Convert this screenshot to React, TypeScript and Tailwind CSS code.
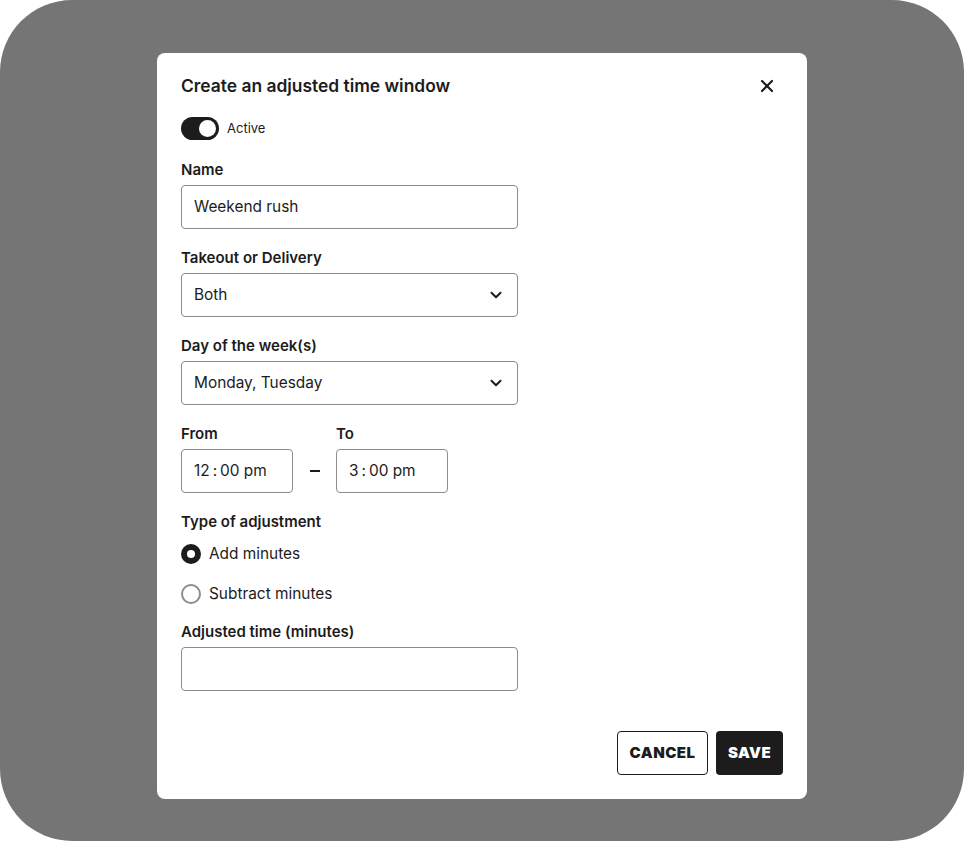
import { useState, type FC, type ReactNode } from "react";
import { ChevronDown, X } from "lucide-react";

const Label: FC<{ children: ReactNode }> = ({ children }) => (
  <label className="block h-5 text-[15px] leading-5 font-semibold text-[#1c1c1c]">
    {children}
  </label>
);

const Select: FC<{ value: string }> = ({ value }) => (
  <div className="mt-[5px] flex h-11 w-[337px] items-center justify-between rounded-[4px] border border-[#8c8c8c] pl-3 pr-[12px]">
    <span className="text-[15.4px] text-[#1c1c1c]">{value}</span>
    <ChevronDown size={18} strokeWidth={2.6} className="text-[#1c1c1c]" />
  </div>
);

const TimeBox: FC<{ h: string; rest: string }> = ({ h, rest }) => (
  <div className="mt-[5px] flex h-11 w-[112px] items-center rounded-[4px] border border-[#8c8c8c] pl-3 text-[15.4px] text-[#1c1c1c]">
    {h}
    <span className="mx-[3px]">:</span>
    {rest}
  </div>
);

const Radio: FC<{ checked: boolean; label: string; onClick: () => void }> = ({
  checked,
  label,
  onClick,
}) => (
  <div className="flex h-10 cursor-pointer items-center gap-2" onClick={onClick}>
    {checked ? (
      <span className="flex h-5 w-5 items-center justify-center rounded-full bg-[#1c1c1c]">
        <span className="h-2 w-2 rounded-full bg-white" />
      </span>
    ) : (
      <span className="h-5 w-5 rounded-full border-2 border-[#8c8c8c]" />
    )}
    <span className="text-[15.4px] text-[#1c1c1c]">{label}</span>
  </div>
);

export default function App() {
  const [active, setActive] = useState(true);
  const [mode, setMode] = useState<"add" | "sub">("add");

  return (
    <div
      className="h-[842px] w-[964px] bg-white"
      style={{ fontFamily: "Inter, 'Noto Sans', sans-serif" }}
    >
      <div className="flex h-[841px] w-[964px] justify-center rounded-[72px] bg-[#757575] pt-[53px]">
        <div className="h-[746px] w-[650px] rounded-[8px] bg-white px-6 pt-[21px]">
          <div className="flex h-6 items-center justify-between">
            <h2 className="text-[17.4px] leading-6 font-semibold text-[#1c1c1c]">
              Create an adjusted time window
            </h2>
            <X size={20} strokeWidth={2.6} className="mr-[6px] text-[#1c1c1c]" />
          </div>

          <div className="mt-[19px] flex items-center gap-2">
            <button
              onClick={() => setActive(!active)}
              className={`flex h-[23px] w-[38px] items-center rounded-full p-[3px] ${
                active ? "justify-end bg-[#1c1c1c]" : "justify-start bg-[#b5b5b5]"
              }`}
            >
              <span className="h-[17px] w-[17px] rounded-full bg-white" />
            </button>
            <span className="text-[13px] text-[#1c1c1c]">Active</span>
          </div>

          <div className="mt-5">
            <Label>Name</Label>
            <div className="mt-[5px] flex h-11 w-[337px] items-center rounded-[4px] border border-[#8c8c8c] px-3 text-[15.4px] text-[#1c1c1c]">
              Weekend rush
            </div>
          </div>

          <div className="mt-[19px]">
            <Label>Takeout or Delivery</Label>
            <Select value="Both" />
          </div>

          <div className="mt-[19px]">
            <Label>Day of the week(s)</Label>
            <Select value="Monday, Tuesday" />
          </div>

          <div className="mt-[19px] flex items-end">
            <div>
              <Label>From</Label>
              <TimeBox h="12" rest="00 pm" />
            </div>
            <div className="flex h-11 w-[43px] items-center justify-center">
              <span className="h-[2px] w-[10px] bg-[#1c1c1c]" />
            </div>
            <div>
              <Label>To</Label>
              <TimeBox h="3" rest="00 pm" />
            </div>
          </div>

          <div className="mt-[19px]">
            <Label>Type of adjustment</Label>
            <div className="mt-[2px]">
              <Radio checked={mode === "add"} label="Add minutes" onClick={() => setMode("add")} />
              <Radio checked={mode === "sub"} label="Subtract minutes" onClick={() => setMode("sub")} />
            </div>
          </div>

          <div className="mt-[8px]">
            <Label>Adjusted time (minutes)</Label>
            <div className="mt-[5px] h-11 w-[337px] rounded-[4px] border border-[#8c8c8c]" />
          </div>

          <div className="mt-10 flex justify-end gap-2">
            <button className="h-11 w-[91px] rounded-[4px] border border-[#1c1c1c] text-[15px] font-black tracking-[0.03em] text-[#1c1c1c]">
              CANCEL
            </button>
            <button className="h-11 w-[67px] rounded-[4px] bg-[#1c1c1c] text-[15px] font-black tracking-[0.03em] text-white">
              SAVE
            </button>
          </div>
        </div>
      </div>
    </div>
  );
}
